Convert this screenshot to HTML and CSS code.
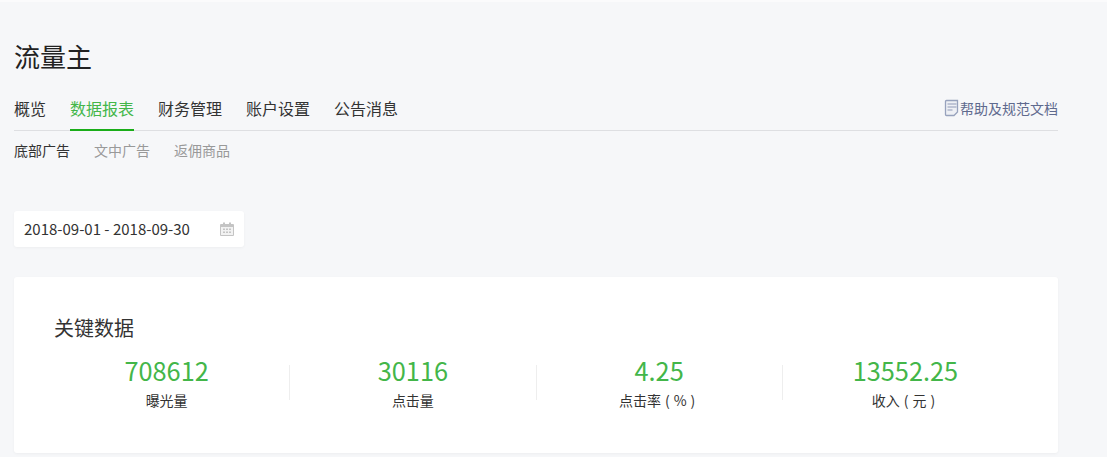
FILE: index.html
```html
<!DOCTYPE html>
<html lang="zh-CN">
<head>
<meta charset="utf-8">
<title>流量主</title>
<link rel="stylesheet" href="styles.css">
</head>
<body>
<main class="page">
  <h1 class="title">流量主</h1>
  <nav class="tabs">
    <a class="tab">概览</a>
    <a class="tab tab-active">数据报表</a>
    <a class="tab">财务管理</a>
    <a class="tab">账户设置</a>
    <a class="tab">公告消息</a>
    <a class="help">
      <svg class="help-icon" width="16" height="18" viewBox="0 0 16 18" fill="none">
        <path d="M2.500 1.500h11v11.500l-3.500 3.500h-7.500a1 1 0 0 1-1-1v-13a1 1 0 0 1 1-1z" fill="#eef0f5" stroke="#97a2bd" stroke-width="1.300"/>
        <path d="M3.500 5h9M3.500 8h9M3.500 11h5" stroke="#8f9ab8" stroke-width="1.200"/>
      </svg>帮助及规范文档
    </a>
  </nav>
  <nav class="subtabs">
    <a class="subtab subtab-active">底部广告</a>
    <a class="subtab">文中广告</a>
    <a class="subtab">返佣商品</a>
  </nav>
  <div class="date">
    <span class="date-text">2018-09-01 - 2018-09-30</span>
    <svg width="14" height="14" viewBox="0 0 14 14">
      <path d="M1 2h2V.5h2V2h4V.5h2V2h2a1 1 0 0 1 1 1v10a1 1 0 0 1-1 1H1a1 1 0 0 1-1-1V3a1 1 0 0 1 1-1z" fill="#c4c4c4"/>
      <path d="M1 5h12v8H1z" fill="#f2f2f2"/>
      <path d="M3 6.500h2v1.500H3zM6 6.500h2v1.500H6zM9 6.500h2v1.500H9zM3 9.500h2V11H3zM6 9.500h2V11H6zM9 9.500h2V11H9z" fill="#c4c4c4"/>
    </svg>
  </div>
  <section class="card">
    <h2 class="card-title">关键数据</h2>
    <div class="stats">
      <div class="stat"><div class="num">708612</div><div class="label">曝光量</div></div>
      <div class="stat"><div class="num">30116</div><div class="label">点击量</div></div>
      <div class="stat"><div class="num">4.25</div><div class="label">点击率<span class="paren">(</span>%<span class="paren">)</span></div></div>
      <div class="stat"><div class="num">13552.25</div><div class="label">收入<span class="paren">(</span>元<span class="paren">)</span></div></div>
    </div>
  </section>
</main>
</body>
</html>
```
FILE: styles.css
```css
* { box-sizing: border-box; }
html, body { margin: 0; height: 100%; overflow: hidden; }
body {
  background: #f6f7f9;
  color: #222;
  font-family: "Noto Sans CJK SC", "Noto Sans", sans-serif;
  border-top: 2px solid #fbfbfc;
}
.page { width: 1058px; padding: 35px 0 0 14px; }
.title { margin: 0; font-size: 26px; font-weight: 400; line-height: 38px; color: #222; }
.tabs {
  display: flex;
  gap: 24px;
  margin-top: 19px;
  height: 37px;
  border-bottom: 1px solid #dedfe2;
  font-size: 16px;
  line-height: 24px;
}
.tab { height: 37px; padding-top: 2px; color: #333; }
.tab-active { color: #43b649; border-bottom: 2px solid #1aad19; }
.help { margin-left: auto; display: flex; align-items: center; height: 24px; margin-top: 2px; font-size: 14px; color: #5f6a8e; }
.help-icon { display: block; }
.subtabs { display: flex; gap: 24px; margin-top: 9px; font-size: 14px; line-height: 20px; color: #999; }
.subtab-active { color: #333; }
.date {
  display: flex;
  justify-content: space-between;
  align-items: center;
  width: 230px;
  height: 36px;
  margin-top: 51px;
  padding: 0 10px;
  background: #fff;
  border-radius: 3px;
  box-shadow: 0 1px 3px rgba(0,0,0,.04);
  font-size: 15px;
  color: #333;
}
.date-text { margin-bottom: 2px; }
.card {
  height: 176px;
  margin-top: 30px;
  padding: 37px 30px 0;
  background: #fff;
  border-radius: 3px;
  box-shadow: 0 1px 3px rgba(0,0,0,.04);
}
.card-title { margin: 0 0 0 10px; font-size: 20px; font-weight: 400; line-height: 28px; color: #333; }
.stats { display: grid; grid-template-columns: repeat(4, 1fr); margin: 23px 0 0 -1px; }
.stat { text-align: center; height: 35px; padding-left: 1px; }
.stat + .stat { border-left: 1px solid #eee; padding-left: 0; }
.num { font-size: 25.3px; line-height: 16px; color: #43b649; margin-top: -3px; }
.label { font-size: 14px; line-height: 20px; margin-top: 12px; color: #333; }
.paren { margin: 0 4px; }
```
